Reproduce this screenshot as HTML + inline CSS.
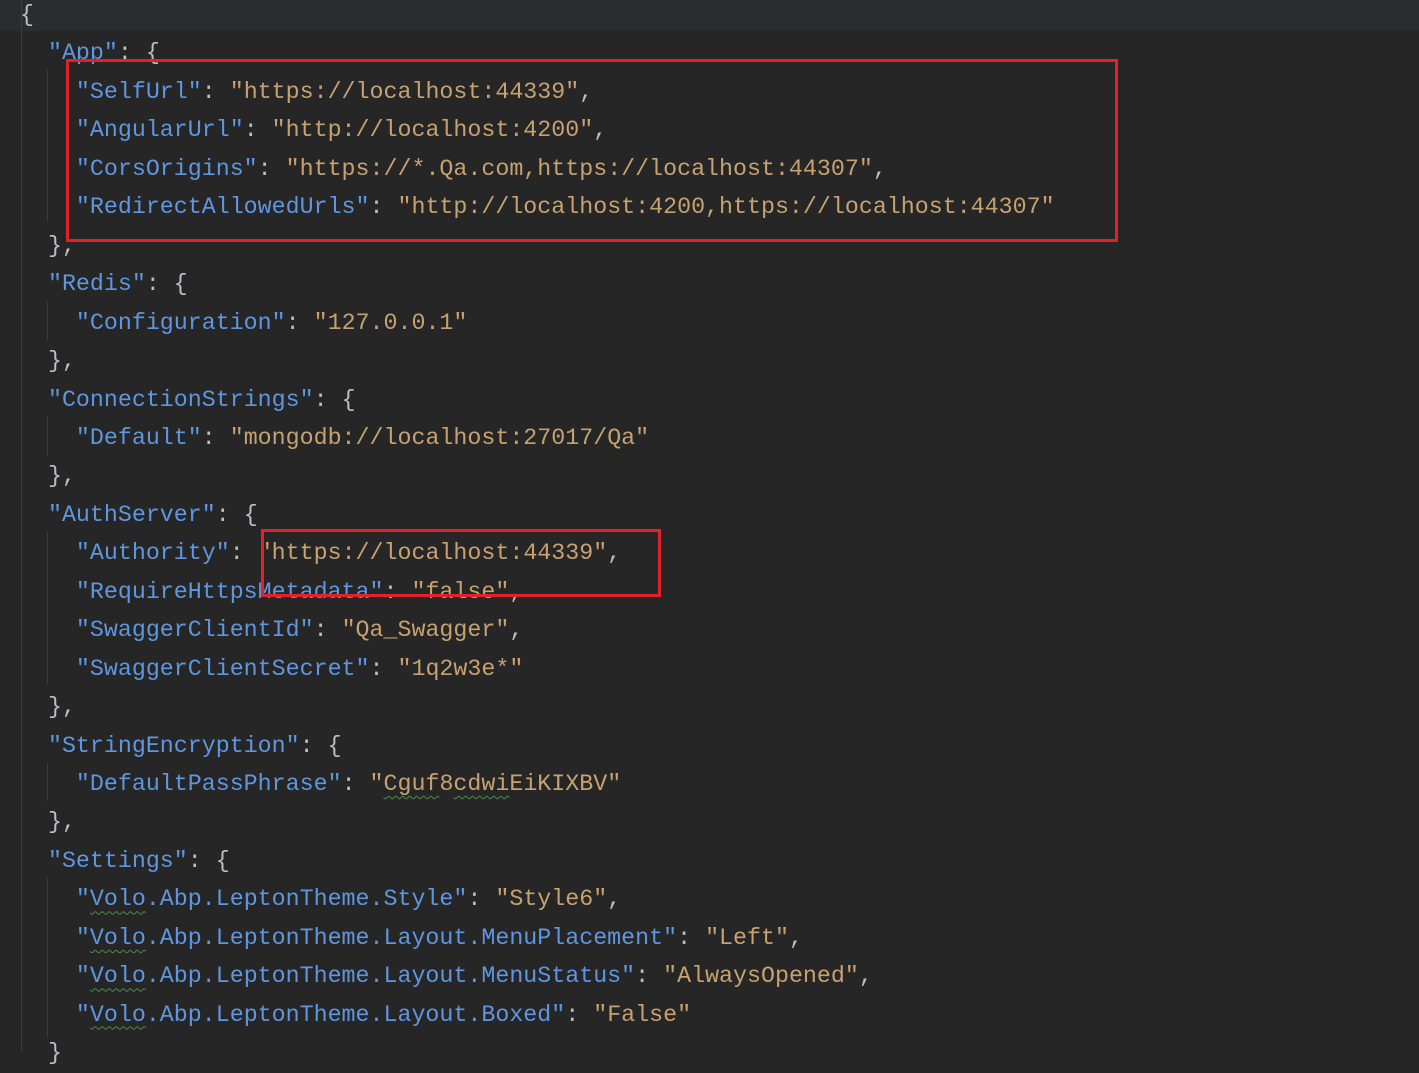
<!DOCTYPE html>
<html><head><meta charset="utf-8"><style>
html,body{margin:0;padding:0;background:#262626;width:1419px;height:1051px;overflow:hidden;}
.ln{position:absolute;left:20px;height:38.45px;line-height:38.45px;font-family:"Liberation Mono",monospace;font-size:23.3px;color:#bcbec4;white-space:pre;margin-top:2px}
.k{color:#5f96e0}.s{color:#c7a270}
.hl{position:absolute;left:0;top:0;width:1419px;height:31px;background:#2b2c2e}
.box{position:absolute;border:3px solid #e3212b;box-sizing:border-box}
.g{position:absolute;width:1px;background:#3c3c3c}
.u{text-decoration:underline wavy #4e8a4e;text-underline-offset:5px;text-decoration-thickness:1px}
</style></head><body>
<div class="hl"></div>
<div class="g" style="left:21px;top:0;height:1051px"></div>
<div class="g" style="left:47px;top:70px;height:152px"></div>
<div class="g" style="left:47px;top:302px;height:38px"></div>
<div class="g" style="left:47px;top:417px;height:38px"></div>
<div class="g" style="left:47px;top:532px;height:152px"></div>
<div class="g" style="left:47px;top:763px;height:38px"></div>
<div class="g" style="left:47px;top:878px;height:160px"></div>
<div class="ln" style="top:-6px">{</div>
<div class="ln" style="top:32.45px">  <span class="k">"App"</span>: {</div>
<div class="ln" style="top:70.9px">    <span class="k">"SelfUrl"</span>: <span class="s">"https://localhost:44339"</span>,</div>
<div class="ln" style="top:109.35px">    <span class="k">"AngularUrl"</span>: <span class="s">"http://localhost:4200"</span>,</div>
<div class="ln" style="top:147.8px">    <span class="k">"CorsOrigins"</span>: <span class="s">"https://*.Qa.com,https://localhost:44307"</span>,</div>
<div class="ln" style="top:186.25px">    <span class="k">"RedirectAllowedUrls"</span>: <span class="s">"http://localhost:4200,https://localhost:44307"</span></div>
<div class="ln" style="top:224.7px">  },</div>
<div class="ln" style="top:263.15px">  <span class="k">"Redis"</span>: {</div>
<div class="ln" style="top:301.6px">    <span class="k">"Configuration"</span>: <span class="s">"127.0.0.1"</span></div>
<div class="ln" style="top:340.05px">  },</div>
<div class="ln" style="top:378.5px">  <span class="k">"ConnectionStrings"</span>: {</div>
<div class="ln" style="top:416.95px">    <span class="k">"Default"</span>: <span class="s">"mongodb://localhost:27017/Qa"</span></div>
<div class="ln" style="top:455.4px">  },</div>
<div class="ln" style="top:493.85px">  <span class="k">"AuthServer"</span>: {</div>
<div class="ln" style="top:532.3px">    <span class="k">"Authority"</span>: <span class="s">"https://localhost:44339"</span>,</div>
<div class="ln" style="top:570.75px">    <span class="k">"RequireHttpsMetadata"</span>: <span class="s">"false"</span>,</div>
<div class="ln" style="top:609.2px">    <span class="k">"SwaggerClientId"</span>: <span class="s">"Qa_Swagger"</span>,</div>
<div class="ln" style="top:647.65px">    <span class="k">"SwaggerClientSecret"</span>: <span class="s">"1q2w3e*"</span></div>
<div class="ln" style="top:686.1px">  },</div>
<div class="ln" style="top:724.55px">  <span class="k">"StringEncryption"</span>: {</div>
<div class="ln" style="top:763px">    <span class="k">"DefaultPassPhrase"</span>: <span class="s">"<span class="u">Cguf</span>8<span class="u">cdwi</span>EiKIXBV"</span></div>
<div class="ln" style="top:801.45px">  },</div>
<div class="ln" style="top:839.9px">  <span class="k">"Settings"</span>: {</div>
<div class="ln" style="top:878.35px">    <span class="k">"<span class="u">Volo</span>.Abp.LeptonTheme.Style"</span>: <span class="s">"Style6"</span>,</div>
<div class="ln" style="top:916.8px">    <span class="k">"<span class="u">Volo</span>.Abp.LeptonTheme.Layout.MenuPlacement"</span>: <span class="s">"Left"</span>,</div>
<div class="ln" style="top:955.25px">    <span class="k">"<span class="u">Volo</span>.Abp.LeptonTheme.Layout.MenuStatus"</span>: <span class="s">"AlwaysOpened"</span>,</div>
<div class="ln" style="top:993.7px">    <span class="k">"<span class="u">Volo</span>.Abp.LeptonTheme.Layout.Boxed"</span>: <span class="s">"False"</span></div>
<div class="ln" style="top:1032.15px">  }</div>
<div class="box" style="left:66px;top:59px;width:1052px;height:183px"></div>
<div class="box" style="left:261px;top:529px;width:400px;height:68px"></div>
</body></html>
